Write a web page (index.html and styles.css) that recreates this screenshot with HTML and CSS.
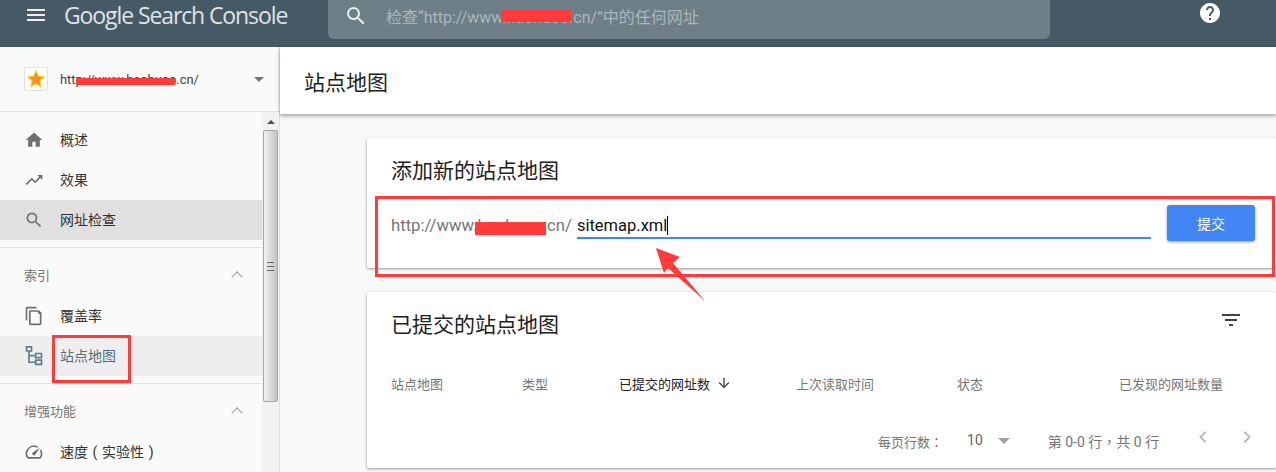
FILE: index.html
```html
<!DOCTYPE html>
<html lang="zh-CN">
<head>
    <meta charset="UTF-8">
    <title>站点地图 - Google Search Console</title>
    <link rel="stylesheet" href="styles.css">
</head>
<body>

<header class="topbar">
    <svg class="menu-icon" viewBox="0 0 24 24"><path d="M3 18h18v-2H3v2zm0-5h18v-2H3v2zm0-7v2h18V6H3z"/></svg>
    <div class="logo">Google Search Console</div>
    <div class="search-box">
        <svg class="search-icon" viewBox="0 0 24 24"><path d="M15.5 14h-.79l-.28-.27A6.47 6.47 0 0 0 16 9.5 6.5 6.5 0 1 0 9.5 16c1.61 0 3.09-.59 4.23-1.57l.27.28v.79l5 4.99L20.49 19l-4.99-5zm-6 0C7.01 14 5 11.99 5 9.5S7.01 5 9.5 5 14 7.01 14 9.5 11.99 14 9.5 14z"/></svg>
        <span class="search-text">检查“http://www.haohuoo.cn/”中的任何网址</span>
    </div>
    <svg class="help-icon" viewBox="0 0 24 24"><path d="M12 2C6.48 2 2 6.48 2 12s4.48 10 10 10 10-4.48 10-10S17.52 2 12 2zm1 17h-2v-2h2v2zm2.07-7.75l-.9.92C13.45 12.9 13 13.5 13 15h-2v-.5c0-1.1.45-2.1 1.17-2.83l1.24-1.26c.37-.36.59-.86.59-1.41 0-1.1-.9-2-2-2s-2 .9-2 2H8c0-2.21 1.79-4 4-4s4 1.79 4 4c0 .88-.36 1.68-.93 2.25z"/></svg>
</header>

<div class="layout">
    <aside class="sidebar">
        <div class="site-picker">
            <div class="site-icon">
                <svg viewBox="0 0 24 24" width="20" height="20">
                    <path d="M12 2l3 6.600 7 .8-5.200 4.800 1.400 7.100L12 17.700 5.800 21.300l1.400-7.100L2 9.400l7-.8z" fill="#ff8a1e" stroke="#ffd23c" stroke-width="1.500"/>
                </svg>
            </div>
            <span class="site-url">http://www.haohuoo.cn/</span>
            <span class="caret-down"></span>
        </div>
        <div class="side-body">
            <nav class="side-nav">
                <ul class="nav-group">
                    <li class="nav-item">
                        <svg viewBox="0 0 24 24"><path d="M10 20v-6h4v6h5v-8h3L12 3 2 12h3v8z"/></svg>概述
                    </li>
                    <li class="nav-item">
                        <svg viewBox="0 0 24 24"><path d="M16 6l2.290 2.290-4.880 4.880-4-4L2 16.590 3.410 18l6-6 4 4 6.300-6.290L22 12V6z"/></svg>效果
                    </li>
                    <li class="nav-item inspect">
                        <svg viewBox="0 0 24 24"><path d="M15.500 14h-.79l-.28-.27A6.470 6.470 0 0 0 16 9.500 6.500 6.500 0 1 0 9.500 16c1.610 0 3.090-.59 4.230-1.570l.27.28v.79l5 4.990L20.490 19l-4.990-5zm-6 0C7.010 14 5 11.990 5 9.500S7.010 5 9.500 5 14 7.010 14 9.500 11.990 14 9.500 14z"/></svg>网址检查
                    </li>
                </ul>
                <ul class="nav-group">
                    <li class="nav-heading">索引<span class="chevron-up"></span></li>
                    <li class="nav-item">
                        <svg viewBox="0 0 24 24"><path d="M15 1H4c-1.100 0-2 .9-2 2v14h2V3h11V1zm3 4H8c-1.100 0-2 .9-2 2v14c0 1.100.9 2 2 2h11c1.100 0 2-.9 2-2V8l-3-3zm1 16H8V7h9v2.500h2V21z"/></svg>覆盖率
                    </li>
                    <li class="nav-item active">
                        <svg viewBox="0 0 24 24" fill="none" stroke="#607d8b" stroke-width="2"><path d="M3 1h6v5H3zM14 9h7v5h-7zM14 17h7v5h-7zM6 6v13.500h8M6 11.500h8"/></svg>站点地图
                    </li>
                </ul>
                <ul class="nav-group">
                    <li class="nav-heading">增强功能<span class="chevron-up"></span></li>
                    <li class="nav-item nav-speed">
                        <svg viewBox="0 0 24 24"><path d="M20.380 8.570l-1.230 1.850a8 8 0 0 1-.22 7.580H5.070A8 8 0 0 1 15.580 6.850l1.850-1.230A10 10 0 0 0 3.350 19a2 2 0 0 0 1.720 1h13.850a2 2 0 0 0 1.740-1 10 10 0 0 0-.27-10.440zM10.590 15.410a2 2 0 0 0 2.830 0l5.660-8.490-8.490 5.660a2 2 0 0 0 0 2.830z"/></svg>速度 ( 实验性 )
                    </li>
                </ul>
            </nav>
            <div class="scrollbar">
                <div class="scroll-up"></div>
                <div class="scroll-thumb"><span class="scroll-grip"></span></div>
            </div>
        </div>
    </aside>

    <main class="content">
        <div class="page-title">站点地图</div>
        <div class="cards">
            <section class="card add-card">
                <h2 class="card-title">添加新的站点地图</h2>
                <div class="add-row">
                    <span class="url-prefix">http://www.haohuoo.cn/</span>
                    <div class="sitemap-input"><span class="sitemap-value">sitemap.xml</span></div>
                    <button class="submit-btn">提交</button>
                </div>
            </section>

            <section class="card list-card">
                <div class="list-head">
                    <h2 class="card-title">已提交的站点地图</h2>
                    <svg class="filter-icon" viewBox="0 0 24 24"><path d="M10 18h4v-2h-4v2zM3 6v2h18V6H3zm3 7h12v-2H6v2z"/></svg>
                </div>
                <div class="table-head">
                    <span>站点地图</span>
                    <span>类型</span>
                    <span class="sorted">已提交的网址数
                        <svg viewBox="0 0 24 24"><path d="M20 12l-1.410-1.410L13 16.170V4h-2v12.170l-5.580-5.590L4 12l8 8 8-8z"/></svg>
                    </span>
                    <span>上次读取时间</span>
                    <span>状态</span>
                    <span>已发现的网址数量</span>
                </div>
                <div class="pager">
                    <span class="pager-label" lang="zh-Hant">每页行数：</span>
                    <span class="pager-size">10</span>
                    <span class="caret-down pager-caret"></span>
                    <span class="pager-range" lang="zh-Hant">第 0-0 行，共 0 行</span>
                    <svg class="pager-arrow" viewBox="0 0 24 24"><path d="M15.410 7.410L14 6l-6 6 6 6 1.410-1.410L10.830 12z"/></svg>
                    <svg class="pager-arrow" viewBox="0 0 24 24"><path d="M10 6L8.590 7.410 13.170 12l-4.580 4.590L10 18l6-6z"/></svg>
                </div>
            </section>
        </div>
    </main>
</div>

<!-- 截图上的红色标注 -->
<div class="mark mark-search"></div>
<div class="mark mark-site"></div>
<div class="mark mark-prefix"></div>
<div class="mark-box mark-box-nav"></div>
<div class="mark-box mark-box-input"></div>
<svg class="mark-arrow" viewBox="0 0 60 60" width="60" height="60">
    <polygon points="6,8 30,17 23,23 55,61 18,28 14,33" fill="#ff3b3b"/>
</svg>

</body>
</html>
```

FILE: styles.css
```css
* {
    box-sizing: border-box;
}

html, body {
    height: 100%;
}

body {
    margin: 0;
    overflow: hidden;
    font-family: Roboto, "Noto Sans CJK SC", sans-serif;
    color: #212121;
    background-color: #f8f9f9;
}

ul {
    list-style: none;
    margin: 0;
    padding: 0;
}

/* top bar */
.topbar {
    display: flex;
    align-items: flex-start;
    height: 47px;
    background-color: #465a65;
    color: white;
}

.menu-icon {
    width: 24px;
    height: 24px;
    margin: 3px 0 0 24px;
    fill: #eceff1;
}

.logo {
    width: 240px;
    margin-left: 16px;
    font-family: "Open Sans", sans-serif;
    font-size: 23px;
    line-height: 31px;
    letter-spacing: -1.1px;
    color: #dfe3e5;
}

.search-box {
    display: flex;
    align-items: center;
    width: 722px;
    height: 39px;
    margin-left: 24px;
    padding: 0 0 8px 16px;
    background-color: #6f7f87;
    border-radius: 0 0 6px 6px;
}

.search-icon {
    width: 24px;
    height: 24px;
    fill: #eceff1;
}

.search-text {
    margin-left: 18px;
    font-size: 16px;
    color: #a9b6bc;
}

.help-icon {
    width: 24px;
    height: 24px;
    margin: 1px 0 0 148px;
    fill: white;
}

/* layout */
.layout {
    display: flex;
    height: 425px;
}

.sidebar {
    flex: none;
    width: 280px;
    background-color: #fafafa;
    border-right: 1px solid #e0e0e0;
}

.site-picker {
    display: flex;
    align-items: center;
    height: 65px;
    padding-left: 24px;
    border-bottom: 1px solid #e0e0e0;
}

.site-icon {
    display: flex;
    align-items: center;
    justify-content: center;
    width: 24px;
    height: 24px;
    background-color: white;
    border: 1px solid #e0e0e0;
    border-radius: 2px;
}

.site-url {
    margin-left: 12px;
    width: 194px;
    font-size: 12.800px;
    color: #3c4043;
}

.caret-down {
    width: 0;
    height: 0;
    border-left: 5px solid transparent;
    border-right: 5px solid transparent;
    border-top: 5px solid #757575;
}

.side-body {
    display: flex;
    height: 360px;
    overflow: hidden;
}

.side-nav {
    flex: 1;
    padding-top: 8px;
}

.nav-group {
    padding-bottom: 7px;
    border-bottom: 1px solid #e0e0e0;
}

.nav-group:last-child {
    border-bottom: none;
}

.nav-item {
    display: flex;
    align-items: center;
    height: 40px;
    padding: 0 0 2px 24px;
    font-size: 14px;
    color: #333;
}

.nav-item svg {
    flex: none;
    width: 20px;
    height: 20px;
    margin: 2px 16px 0 0;
    fill: #6f6f6f;
}

.nav-item.inspect {
    background-color: #e0e0e0;
}

.nav-item.active {
    background-color: #eeeeee;
    color: #546e7a;
}

.nav-item.active svg {
    fill: none;
}

.nav-speed {
    word-spacing: 1.150px;
}

/* TC face centres the full-width punctuation */
.pager-label, .pager-range {
    font-family: Roboto, "Noto Sans CJK TC", sans-serif;
}

.nav-heading {
    display: flex;
    align-items: center;
    justify-content: space-between;
    height: 48px;
    padding: 5px 21px 0 24px;
    font-size: 13px;
    color: #757575;
}

.chevron-up {
    width: 8px;
    height: 8px;
    margin-top: 4px;
    border-left: 1.500px solid #9e9e9e;
    border-top: 1.500px solid #9e9e9e;
    transform: rotate(45deg);
}

/* the old windows style scrollbar */
.scrollbar {
    flex: none;
    width: 17px;
    background-color: #f1f1f1;
}

.scroll-up {
    position: relative;
    height: 18px;
    background-color: #f1f1f1;
}

.scroll-up::after {
    content: "";
    position: absolute;
    top: 8px;
    left: 5px;
    border-left: 4px solid transparent;
    border-right: 4px solid transparent;
    border-bottom: 4px solid #505050;
}

.scroll-thumb {
    display: flex;
    align-items: center;
    justify-content: center;
    width: 15px;
    height: 272px;
    margin-left: 1px;
    background: linear-gradient(to right, #f0f0f0, #c4c4c4);
    border: 1px solid #a8a8a8;
    border-radius: 2px;
}

.scroll-grip {
    width: 7px;
    height: 9px;
    border-top: 1px solid #666;
    border-bottom: 1px solid #666;
    background: linear-gradient(to bottom, transparent 3px, #666 3px, #666 4px, transparent 4px);
}

/* main column */
.content {
    flex: 1;
    min-width: 0;
}

.page-title {
    display: flex;
    align-items: center;
    height: 67px;
    padding-left: 24px;
    font-size: 21px;
    color: #212121;
    background-color: white;
    box-shadow: 0 2px 4px rgba(0, 0, 0, 0.35);
}

.cards {
    display: flex;
    flex-direction: column;
    gap: 24px;
    padding: 24px 0 0 87px;
}

.card {
    background-color: white;
    border-radius: 2px;
    box-shadow: 0 1px 3px rgba(0, 0, 0, 0.4);
}

.card-title {
    margin: 0;
    font-size: 21px;
    font-weight: 400;
    color: #212121;
}

.add-card {
    height: 130px;
    padding: 16px 21px 0 24px;
}

.add-row {
    display: flex;
    align-items: flex-start;
    margin-top: 21px;
}

.url-prefix {
    margin-top: 11px;
    font-size: 16.700px;
    line-height: 19px;
    color: #757575;
}

.sitemap-input {
    flex: 1;
    height: 34px;
    margin: 0 16px 0 5px;
    padding-top: 11px;
    font-size: 16.500px;
    line-height: 19px;
    color: #111;
    border-bottom: 2px solid #4285f4;
}

.sitemap-value {
    display: inline-block;
    height: 19px;
    border-right: 1px solid black;
}

.submit-btn {
    width: 88px;
    height: 36px;
    font-family: inherit;
    font-size: 14px;
    color: white;
    background-color: #4285f4;
    border: none;
    border-radius: 3px;
    box-shadow: 0 1px 3px rgba(0, 0, 0, 0.4);
}

.list-card {
    height: 176px;
}

.list-head {
    display: flex;
    align-items: center;
    justify-content: space-between;
    height: 64px;
    padding: 0 33px 2px 24px;
}

.filter-icon {
    width: 24px;
    height: 24px;
    margin-bottom: 6px;
    fill: #424242;
}

.table-head {
    display: grid;
    grid-template-columns: 131px 97px 177px 161px 162px 1fr;
    align-items: center;
    height: 24px;
    margin-top: 15px;
    padding-left: 24px;
    font-size: 13px;
    color: #757575;
}

.table-head .sorted {
    display: flex;
    align-items: center;
    gap: 6px;
    color: #212121;
}

.sorted svg {
    width: 16px;
    height: 16px;
    fill: #424242;
}

.pager {
    display: flex;
    align-items: center;
    height: 24px;
    margin-top: 34px;
    padding-left: 511px;
    font-size: 13px;
    color: #757575;
}

.pager-label {
    flex: none;
    white-space: nowrap;
}

.pager-size {
    margin: 0 0 2px 24px;
    font-size: 14px;
    color: #616161;
}

.pager-caret {
    flex: none;
    margin-left: 15px;
    border-left-width: 6px;
    border-right-width: 6px;
    border-top-width: 6px;
    border-top-color: #a0a0a0;
}

.pager-range {
    flex: none;
    margin-left: 38px;
    width: 143px;
    font-size: 14px;
    white-space: nowrap;
}

.pager-arrow {
    flex: none;
    width: 24px;
    height: 24px;
    margin: 0 20px 8px 0;
    fill: #bdbdbd;
}

.pager-arrow:last-child {
    margin-right: 0;
}

/* red marks drawn over the screenshot */
.mark {
    position: absolute;
    background-color: #ff3b3b;
}

.mark-search {
    left: 501px;
    top: 10px;
    width: 70px;
    height: 12px;
}

.mark-site {
    left: 76px;
    top: 78px;
    width: 100px;
    height: 7px;
    border-radius: 3px;
}

.mark-prefix {
    left: 475px;
    top: 222px;
    width: 71px;
    height: 13px;
}

.mark-box {
    position: absolute;
    border: 3px solid #ff3b3b;
}

.mark-box-nav {
    left: 52px;
    top: 335px;
    width: 79px;
    height: 48px;
}

.mark-box-input {
    left: 375px;
    top: 196px;
    width: 900px;
    height: 81px;
}

.mark-arrow {
    position: absolute;
    left: 650px;
    top: 240px;
    overflow: visible;
}
```
